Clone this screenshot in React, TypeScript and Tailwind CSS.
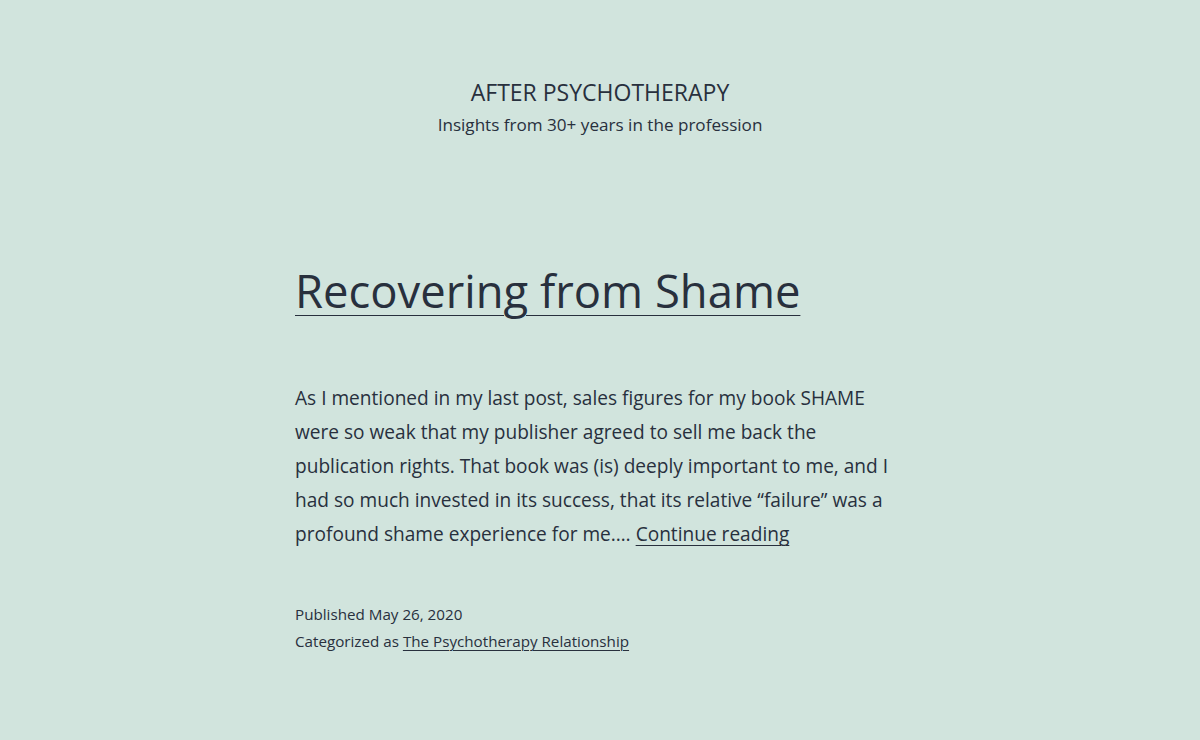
export default function App() {
  return (
    <div
      className="min-h-[740px] w-full bg-[#d1e4dd] text-[#28303d]"
      style={{ fontFamily: '"Open Sans", sans-serif' }}
    >
      <header className="flex flex-col items-center pt-[76px]">
        <p className="text-[23px] leading-[32px] uppercase">After Psychotherapy</p>
        <p className="text-[17.1px] leading-[32px] mt-[1px]">Insights from 30+ years in the profession</p>
      </header>
      <main className="mx-auto w-[610px] mt-[121px]">
        <h2 className="text-[45.4px] leading-[56px] font-normal">
          <a href="#" className="underline decoration-1 underline-offset-[7px]">Recovering from Shame</a>
        </h2>
        <p className="mt-[63px] text-[19.1px] leading-[34px]">
          As I mentioned in my last post, sales figures for my book SHAME were so weak that my publisher agreed to sell me back the publication rights. That book was (is) deeply important to me, and I had so much invested in its success, that its relative “failure” was a profound shame experience for me.…{' '}
          <a href="#" className="underline decoration-1 underline-offset-[4px]">Continue reading</a>
        </p>
        <div className="mt-[50px] text-[15.2px] leading-[27px]">
          <p>Published May 26, 2020</p>
          <p>
            Categorized as{' '}
            <a href="#" className="underline decoration-1 underline-offset-[3px]">The Psychotherapy Relationship</a>
          </p>
        </div>
      </main>
    </div>
  );
}
